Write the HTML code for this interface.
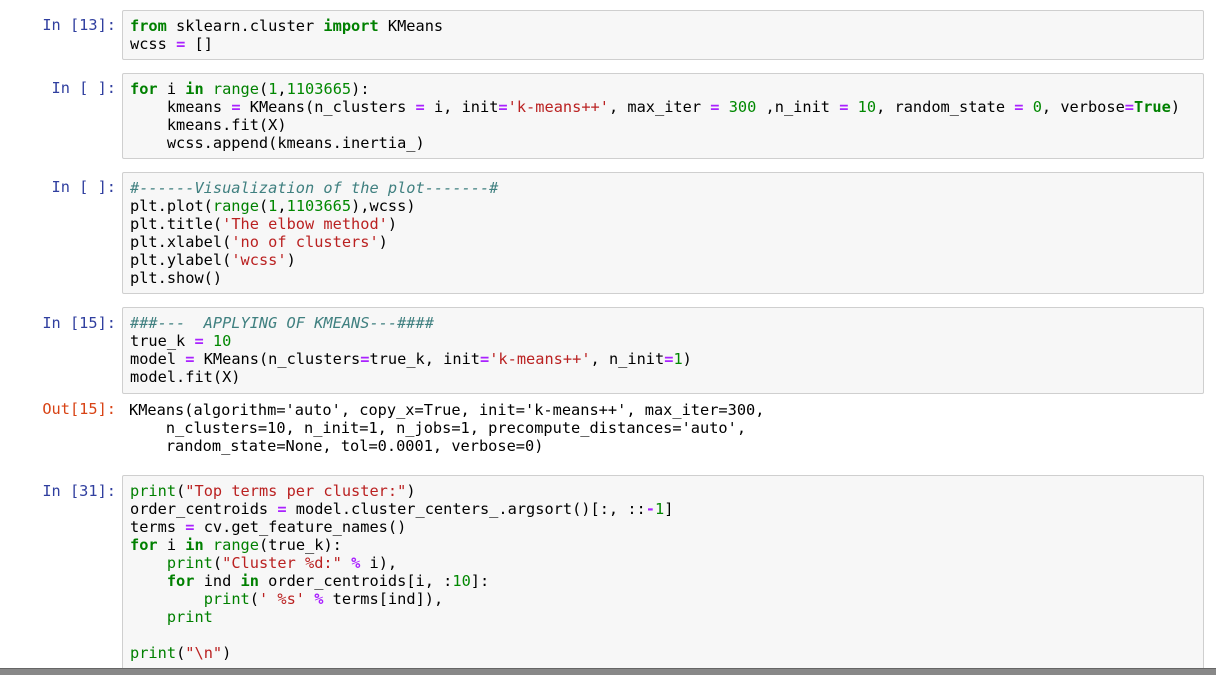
<!DOCTYPE html>
<html><head><meta charset="utf-8"><style>
body{margin:0;width:1216px;height:674px;background:#fff;overflow:hidden;position:relative;font-family:"DejaVu Sans Mono","Liberation Mono",monospace;font-size:15.3px;}
.p{position:absolute;right:1100px;text-align:right;color:#303F9F;line-height:18px;white-space:pre;}
.o{color:#D84315;}
.c{position:absolute;left:122px;width:1082px;background:#f7f7f7;border:1px solid #cfcfcf;border-radius:2px;box-sizing:border-box;}
pre{margin:0;padding:6px 0 0 7px;font:inherit;line-height:18px;color:#000;}
.out{position:absolute;left:122px;}
.k{color:#008000;font-weight:bold}.b{color:#008000}.n{color:#080}.s{color:#BA2121}.op{color:#A2F;font-weight:bold}.cm{color:#408080;font-style:italic}.si{color:#BB6688;font-weight:bold}
.bar{position:absolute;left:0;top:668px;width:1216px;height:6px;background:#888;border-top:1px solid #666;}
</style></head><body>
<div class="p" style="top:16px">In [13]:</div>
<div class="c" style="top:10px;height:50px"><pre><span class="k">from</span> sklearn.cluster <span class="k">import</span> KMeans
wcss <span class="op">=</span> []</pre></div>

<div class="p" style="top:79px">In [ ]:</div>
<div class="c" style="top:73px;height:86px"><pre><span class="k">for</span> i <span class="k">in</span> <span class="b">range</span>(<span class="n">1</span>,<span class="n">1103665</span>):
    kmeans <span class="op">=</span> KMeans(n_clusters <span class="op">=</span> i, init<span class="op">=</span><span class="s">'k-means++'</span>, max_iter <span class="op">=</span> <span class="n">300</span> ,n_init <span class="op">=</span> <span class="n">10</span>, random_state <span class="op">=</span> <span class="n">0</span>, verbose<span class="op">=</span><span class="k">True</span>)
    kmeans.fit(X)
    wcss.append(kmeans.inertia_)</pre></div>

<div class="p" style="top:178px">In [ ]:</div>
<div class="c" style="top:172px;height:122px"><pre><span class="cm">#------Visualization of the plot-------#</span>
plt.plot(<span class="b">range</span>(<span class="n">1</span>,<span class="n">1103665</span>),wcss)
plt.title(<span class="s">'The elbow method'</span>)
plt.xlabel(<span class="s">'no of clusters'</span>)
plt.ylabel(<span class="s">'wcss'</span>)
plt.show()</pre></div>

<div class="p" style="top:314px">In [15]:</div>
<div class="c" style="top:307px;height:87px"><pre><span class="cm">###---  APPLYING OF KMEANS---####</span>
true_k <span class="op">=</span> <span class="n">10</span>
model <span class="op">=</span> KMeans(n_clusters<span class="op">=</span>true_k, init<span class="op">=</span><span class="s">'k-means++'</span>, n_init<span class="op">=</span><span class="n">1</span>)
model.fit(X)</pre></div>

<div class="p o" style="top:400px">Out[15]:</div>
<pre class="out" style="top:395px">KMeans(algorithm='auto', copy_x=True, init='k-means++', max_iter=300,
    n_clusters=10, n_init=1, n_jobs=1, precompute_distances='auto',
    random_state=None, tol=0.0001, verbose=0)</pre>

<div class="p" style="top:482px">In [31]:</div>
<div class="c" style="top:475px;height:196px"><pre><span class="b">print</span>(<span class="s">"Top terms per cluster:"</span>)
order_centroids <span class="op">=</span> model.cluster_centers_.argsort()[:, ::<span class="op">-</span><span class="n">1</span>]
terms <span class="op">=</span> cv.get_feature_names()
<span class="k">for</span> i <span class="k">in</span> <span class="b">range</span>(true_k):
    <span class="b">print</span>(<span class="s">"Cluster %d:"</span> <span class="op">%</span> i),
    <span class="k">for</span> ind <span class="k">in</span> order_centroids[i, :<span class="n">10</span>]:
        <span class="b">print</span>(<span class="s">' %s'</span> <span class="op">%</span> terms[ind]),
    <span class="b">print</span>

<span class="b">print</span>(<span class="s">"\n"</span>)</pre></div>
<div class="bar"></div>
</body></html>
